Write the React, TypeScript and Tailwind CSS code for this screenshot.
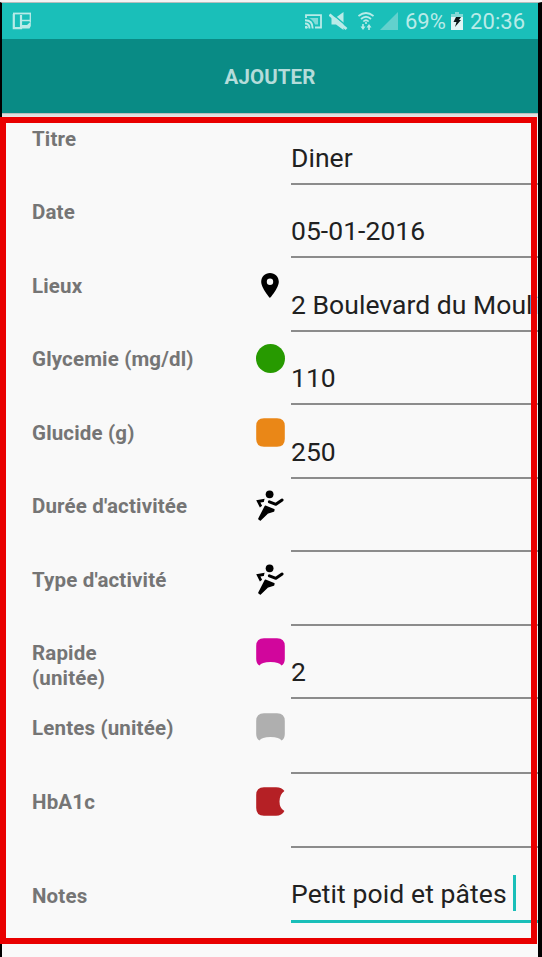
import type { ReactNode } from "react";

const Pin = () => (
  <svg width="18" height="25" viewBox="0 0 18 25">
    <path fillRule="evenodd" d="M9 0C4 0 .2 3.8.2 8.700C.2 15 9 25 9 25s8.800-10 8.800-16.300C17.800 3.800 14 0 9 0Zm0 5.500a3.200 3.200 0 1 1 0 6.400a3.200 3.200 0 0 1 0-6.400Z" />
  </svg>
);

const Runner = () => (
  <svg width="28" height="31" viewBox="0 0 28 31" className="-mt-[3px] mr-[1px] shrink-0">
    <circle cx="13.600" cy="4.300" r="3.900" />
    <path d="M.2 10.300L8.600 8.700L7.800 12L4.400 12.500L6.100 15.800L3.900 17.600Z" />
    <path d="M13.400 11.800L19.900 14.300L26.100 10" fill="none" stroke="#000" strokeWidth="3" strokeLinejoin="round" strokeLinecap="round" />
    <path d="M9.300 16.300L17.900 19.700L17.600 21L11.300 23.100L4.300 29.900L2.900 28.900Z" stroke="#000" strokeWidth="1.500" strokeLinejoin="round" />
  </svg>
);

const Shape = ({ color, d }: { color: string; d: string }) => (
  <svg width="29" height="29" viewBox="0 0 29 29" className="-mt-[2px] ml-[1px] shrink-0">
    <path fill={color} d={d} />
  </svg>
);

const roundBox = "M8 .2H21Q28.800.2 28.800 8V21Q28.800 28.800 21 28.800H8Q.2 28.800.2 21V8Q.2.2 8 .2Z";
const notchBottom = "M8 .2H21Q28.800.2 28.800 8V21Q28.800 25.500 25.500 27.600Q23.500 24 14.500 24Q5.500 24 3.500 27.600Q.2 25.500.2 21V8Q.2.2 8 .2Z";
const notchRight = "M8 .2H20Q26 .2 28.400 4Q23.500 7.500 23.500 14.500Q23.500 21.500 28.400 24Q26 28.800 20 28.800H8Q.2 28.800.2 21V8Q.2.2 8 .2Z";

type Field = { label: ReactNode; value: string; height: string; icon?: ReactNode };

const fields: Field[] = [
  { label: "Titre", value: "Diner", height: "h-[72px]" },
  { label: "Date", value: "05-01-2016", height: "h-[73.400px]" },
  { label: "Lieux", value: "2 Boulevard du Mouli", height: "h-[73.600px]", icon: <Pin /> },
  {
    label: "Glycemie (mg/dl)",
    value: "110",
    height: "h-[73px]",
    icon: <div className="-mt-[2px] ml-[1px] size-[29px] shrink-0 rounded-full bg-[#279a00]" />,
  },
  { label: "Glucide (g)", value: "250", height: "h-[74px]", icon: <Shape color="#ea8717" d={roundBox} /> },
  { label: "Durée d'activitée", value: "", height: "h-[73px]", icon: <Runner /> },
  { label: "Type d'activité", value: "", height: "h-[74px]", icon: <Runner /> },
  {
    label: <>Rapide<br />(unitée)</>,
    value: "2",
    height: "h-[73px]",
    icon: <Shape color="#d1069c" d={notchBottom} />,
  },
  { label: "Lentes (unitée)", value: "", height: "h-[75px]", icon: <Shape color="#afafaf" d={notchBottom} /> },
  { label: "HbA1c", value: "", height: "h-[74px]", icon: <Shape color="#b52025" d={notchRight} /> },
];

const StatusBar = () => (
  <div className="flex h-9 items-center bg-[#1abfb9] pl-[10px] text-[#b9ebe8]">
    <svg width="20" height="18" viewBox="0 0 20 18" fill="none" stroke="currentColor" className="shrink-0">
      <path d="M1 1.500H19" strokeWidth="1.800" />
      <path d="M1.800 2V16.200H9V3" strokeWidth="2.200" />
      <path d="M9 8.500H18M18.300 2V10" strokeWidth="1.300" />
      <path d="M9 13H15L18.800 9.500V14L17.500 16.500H9Z" fill="currentColor" stroke="none" />
    </svg>
    <svg width="17" height="15" viewBox="0 0 17 15" fill="none" stroke="currentColor" className="ml-[273px] shrink-0">
      <path d="M1 4V1.200H16V13.500H10" strokeWidth="1.800" />
      <path d="M4 4H13V10.500H10Q8 5.500 4 4Z" fill="currentColor" stroke="none" opacity=".65" />
      <path d="M0 6.200Q7.700 6.200 7.700 14.500M0 9.500Q4.500 9.500 4.500 14.500" strokeWidth="1.900" />
      <circle cx="1.200" cy="13.200" r="1.500" fill="currentColor" stroke="none" />
    </svg>
    <svg width="19" height="19" viewBox="0 0 19 19" className="ml-[7px] shrink-0">
      <path d="M2.500 5.500H7L14.500 0V18L7 12.500H2.500Z" fill="currentColor" />
      <path d="M1.500 .5L18.500 14.800" stroke="#1abfb9" strokeWidth="1.500" />
      <path d="M.5 2.500L17.500 17" stroke="currentColor" strokeWidth="2.800" />
    </svg>
    <svg width="16" height="18" viewBox="0 0 16 18" fill="none" stroke="currentColor" strokeWidth="1.700" className="ml-[10px] shrink-0">
      <path d="M.5 4Q8-2 15.500 4M3 7Q8 2.500 13 7M5.300 9.500Q8 7 10.700 9.500" />
      <circle cx="8" cy="11" r="1.100" fill="currentColor" stroke="none" />
      <path d="M5 12V16M11 18V14" strokeWidth="1.600" />
      <path d="M2.500 14.500H7.500L5 18ZM8.500 15.500H13.500L11 12Z" fill="currentColor" stroke="none" />
    </svg>
    <svg width="18" height="18" viewBox="0 0 18 18" className="ml-[6px] shrink-0">
      <path d="M18 0V18H0Z" fill="#62d1cd" />
    </svg>
    <span className="ml-[7px] w-[41px] shrink-0 whitespace-nowrap text-[22px]">69%</span>
    <svg width="12" height="18" viewBox="0 0 12 18" className="ml-[5px] shrink-0">
      <path d="M4 0H8V2H12V18H0V2H4Z" fill="#e1f6f5" />
      <path d="M4 0H8V2H12V5H0V2H4Z" fill="#83dad6" />
      <path d="M5 5H10L8 8H10L4 15L5.500 10H2.500Z" fill="#0b1919" />
    </svg>
    <span className="ml-[7px] shrink-0 whitespace-nowrap text-[22px] tracking-[0.1px]">20:36</span>
  </div>
);

const Label = ({ children }: { children: ReactNode }) => (
  <div className="w-[224px] shrink-0 whitespace-nowrap pt-[1px] text-[20.500px] font-bold leading-[25px] tracking-[0.160px] text-[#757575]">
    {children}
  </div>
);

export default function App() {
  return (
    <div
      className="relative h-[957px] w-[542px] overflow-hidden bg-[#f3f3f3] pt-[2px]"
      style={{ fontFamily: 'Roboto, "Noto Sans", sans-serif' }}
    >
      <div className="h-[955px] border-l-2 border-r-4 border-t border-x-black border-t-[#b5bdbd] bg-[#f9f9f9]">
        <StatusBar />
        <header className="flex h-[74px] items-center justify-center bg-[#098b85] text-[20.500px] font-bold tracking-[0.100px] text-[#b5dcda]">
          <span className="pt-[2px]">AJOUTER</span>
        </header>
        <main className="border-t border-[#b9bebe] pl-[30px] shadow-[inset_0_3px_2px_#dedede]">
          {fields.map((field, index) => (
            <div key={index} className={`flex items-end first:-mt-px ${field.height}`}>
              <div className="flex h-[59px] shrink-0">
                <Label>{field.label}</Label>
                <div className="-ml-[1px] flex w-[30px] justify-center">{field.icon}</div>
              </div>
              <div className="ml-[6px] h-[44px] min-w-0 flex-1 whitespace-nowrap border-b-2 border-[#8c8c8c] text-[26.500px] leading-[34px] tracking-[0.040px] text-[#212121]">
                {field.value}
              </div>
            </div>
          ))}
          <div className="flex h-[75px] items-end">
            <div className="flex h-[40px]">
              <Label>Notes</Label>
            </div>
            <div className="ml-[35px] flex h-[47px] min-w-0 flex-1 whitespace-nowrap border-b-[3px] border-[#1abfb9] text-[26.500px] leading-[36px] tracking-[0.100px] text-[#212121]">
              Petit poid et pâtes
              <span className="-mt-[1px] ml-[6px] h-[36px] w-[3px] bg-[#1abfb9]" />
            </div>
          </div>
        </main>
      </div>
      <div className="pointer-events-none absolute left-0 top-[117px] h-[827px] w-[537px] border-[6px] border-[#e90000]" />
    </div>
  );
}
